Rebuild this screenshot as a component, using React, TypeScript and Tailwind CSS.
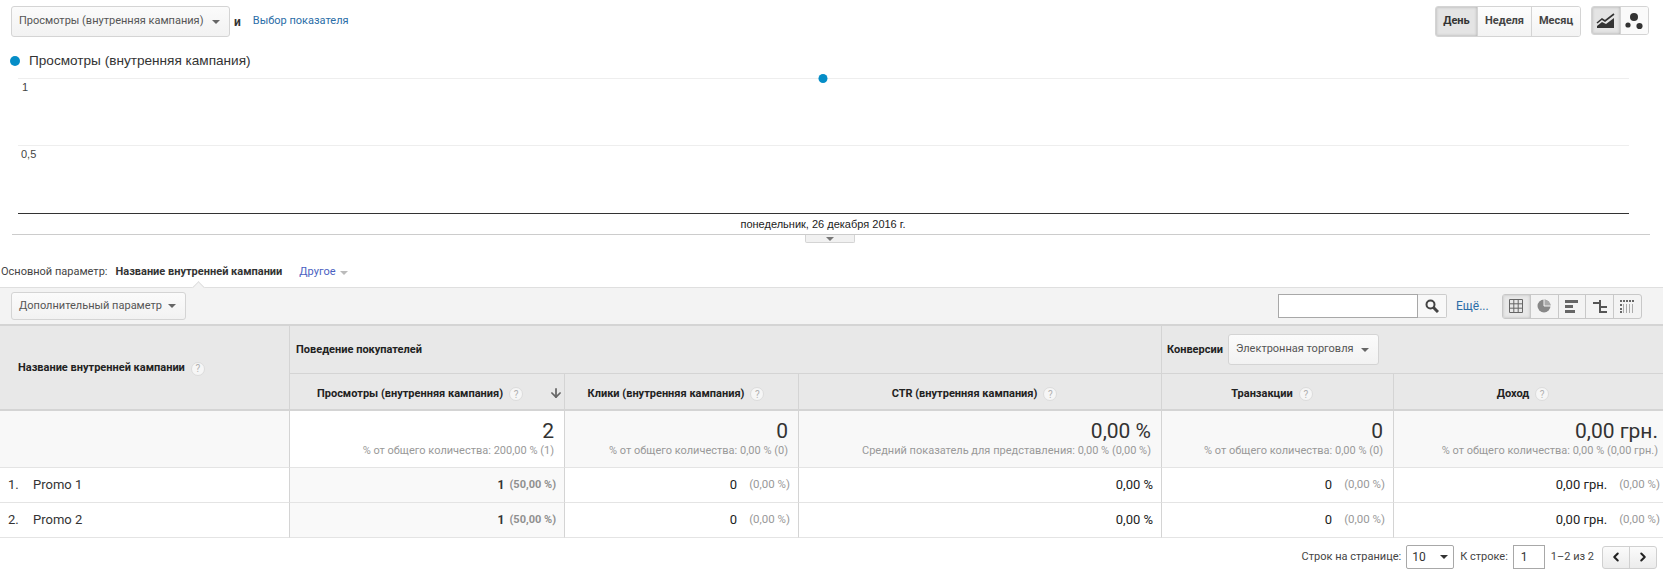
import { ArrowDown, ChevronLeft, ChevronRight } from "lucide-react";
import React from "react";

const COLS = "grid grid-cols-[289px_275px_234px_363px_232px_270px]";

// ---- small pieces ----

function Caret({ className = "border-t-[#666]" }: { className?: string }) {
  return <span className={`inline-block shrink-0 w-0 h-0 border-x-[4px] border-x-transparent border-t-[4px] ${className}`} />;
}

function Help() {
  return (
    <span className="inline-flex w-[14px] h-[14px] items-center justify-center rounded-full bg-[#f6f6f6] border border-[#dcdcdc] text-[10px] font-normal text-[#b0b0b0] ml-[6px]">
      ?
    </span>
  );
}

function DropButton({ label, className }: { label: string; className: string }) {
  return (
    <div
      className={`flex items-center justify-between whitespace-nowrap rounded-[3px] border border-[#d4d4d4] bg-linear-to-b from-[#fbfbfb] to-[#f2f2f2] text-[11px] text-[#555] pl-[7px] pr-[9px] ${className}`}
    >
      <span>{label}</span>
      <Caret />
    </div>
  );
}

function ChartToggle() {
  return (
    <div className="flex h-[29px] w-[58px] ml-[10px] rounded-[3px] border border-[#d4d4d4] overflow-hidden">
      <div className="flex-1 flex items-center justify-center bg-[#e4e4e4] shadow-[inset_0_0_3px_#aaa]">
        <svg width="20" height="16" viewBox="0 0 20 16">
          <path d="M1 10 L6 6 L9 8 L18 1" fill="none" stroke="#333" strokeWidth="1.6" />
          <path d="M1 15 L1 13 L6 9 L10 11 L18 5 L18 15 Z" fill="#333" />
        </svg>
      </div>
      <div className="flex-1 flex items-center justify-center border-l border-[#d4d4d4] bg-[#fafafa]">
        <svg width="18" height="18" viewBox="0 0 18 18">
          <circle cx="9" cy="5" r="4" fill="#333" />
          <circle cx="3" cy="13" r="2.6" fill="#333" />
          <circle cx="14.5" cy="14" r="3.1" fill="#333" />
        </svg>
      </div>
    </div>
  );
}

function ViewIcon({ kind }: { kind: number }) {
  if (kind === 0)
    return (
      <svg width="14" height="14" viewBox="0 0 14 14" fill="none" stroke="#666">
        <path d="M.5.5h13v13H.5zM.5 4.8h13M.5 9.2h13M4.8.5v13M9.2.5v13" />
      </svg>
    );
  if (kind === 1)
    return (
      <svg width="14" height="14" viewBox="0 0 14 14">
        <circle cx="7" cy="7" r="6.5" fill="#888" />
        <path d="M7 7V.5A6.5 6.5 0 0 1 13.5 7Z" fill="#aaa" />
        <path d="M7 0v7h7" fill="none" stroke="#f4f4f4" strokeWidth="1" />
      </svg>
    );
  if (kind === 2)
    return (
      <svg width="13" height="13" viewBox="0 0 13 13" fill="#666">
        <path d="M0 0h13v3H0zM0 5h8v3H0zM0 10h10v3H0z" />
      </svg>
    );
  if (kind === 3)
    return (
      <svg width="14" height="13" viewBox="0 0 14 13" fill="#555">
        <path d="M0 2h8v2H0zM6 0h2v13H6zM6 6h8v2H6zM6 11h8v2H6z" />
      </svg>
    );
  return (
    <svg width="15" height="13" viewBox="0 0 15 13">
      <path d="M0 0h2v2H0zM3 0h2v2H3zM6 0h2v2H6zM9 0h2v2H9zM12 0h2v2h-2zM0 4h2v2H0zM0 8h2v2H0zM0 11h2v2H0z" fill="#666" />
      <path d="M3.5 4v9M6.5 4v9M9.5 4v9M12.5 4v9" stroke="#aaa" fill="none" />
    </svg>
  );
}

function SearchIcon() {
  return (
    <svg width="14" height="14" viewBox="0 0 14 14" fill="none" stroke="#444">
      <circle cx="5.5" cy="5.5" r="4" strokeWidth="2" />
      <path d="M8.5 8.5L13 13" strokeWidth="3" />
    </svg>
  );
}

// ---- top area ----

function TopBar() {
  return (
    <div className="flex items-center h-[31px] mt-[6px] pl-[11px] pr-[14px]">
      <DropButton label="Просмотры (внутренняя кампания)" className="w-[219px] h-[31px]" />
      <span className="ml-[4px] text-[12px] font-bold text-[#333]">и</span>
      <a className="ml-[12px] text-[11px] text-[#2a6da7]">Выбор показателя</a>
      <div className="ml-auto flex">
        <div className="flex h-[31px] w-[146px] rounded-[3px] border border-[#d4d4d4] text-[11px] font-bold text-[#444] overflow-hidden">
          <div className="w-[41px] flex items-center justify-center bg-[#e4e4e4] shadow-[inset_0_0_3px_#aaa] text-[#333]">День</div>
          <div className="w-[54px] flex items-center justify-center bg-linear-to-b from-[#fdfdfd] to-[#f3f3f3] border-l border-[#d4d4d4]">Неделя</div>
          <div className="flex-1 flex items-center justify-center bg-linear-to-b from-[#fdfdfd] to-[#f3f3f3] border-l border-[#d4d4d4]">Месяц</div>
        </div>
        <ChartToggle />
      </div>
    </div>
  );
}

function Chart() {
  return (
    <svg width="1663" height="166" viewBox="0 69 1663 166" className="block">
      <path d="M18 78.5H1629M18 145.5H1629" stroke="#eeeeee" />
      <path d="M18 213.5H1629" stroke="#333" />
      <path d="M12 234.5H1650" stroke="#cccccc" />
      <circle cx="823" cy="78.5" r="4.5" fill="#058dc7" />
      <g fontFamily="'Liberation Sans', Arial, sans-serif" fontSize="11" fill="#444">
        <text x="22" y="91">1</text>
        <text x="21" y="158">0,5</text>
        <text x="823" y="228" textAnchor="middle" fill="#222">понедельник, 26 декабря 2016 г.</text>
      </g>
    </svg>
  );
}

function ChartArea() {
  return (
    <div>
      <TopBar />
      <div className="flex items-center h-[16px] mt-[16px] pl-[10px]">
        <span className="w-[10px] h-[10px] rounded-full bg-[#058dc7]" />
        <span className="ml-[9px] text-[13.6px] text-[#333] font-['Liberation_Sans',sans-serif]">Просмотры (внутренняя кампания)</span>
      </div>
      <Chart />
      <div className="flex items-center justify-center ml-[805px] w-[50px] h-[8px] bg-[#f1f1f1] border-x border-b border-[#d4d4d4] rounded-b-[2px]">
        <Caret className="border-t-[#777]" />
      </div>
    </div>
  );
}

// ---- table toolbar ----

function DimensionRow() {
  return (
    <div className="flex items-center h-[44px] pt-[15px] text-[11px]">
      <span className="ml-[1px] text-[#444]">Основной параметр:</span>
      <span className="ml-[8px] font-bold text-[#333]">Название внутренней кампании</span>
      <span className="ml-[17px] text-[#4a5fc1]">Другое</span>
      <Caret className="ml-[4px] border-t-[#bbb]" />
    </div>
  );
}

function Toolbar() {
  return (
    <div className="relative flex items-center h-[39px] pl-[11px] pr-[21px] bg-[#f3f3f3] border-t border-[#dfdfdf] border-b-2 border-b-[#d4d4d4]">
      <span className="absolute left-[194px] -top-[5px] w-[9px] h-[9px] rotate-45 bg-[#f3f3f3] border-l border-t border-[#dfdfdf]" />
      <DropButton label="Дополнительный параметр" className="w-[175px] h-[28px]" />
      <div className="ml-auto flex h-[24px] w-[169px]">
        <div className="w-[140px] bg-white border border-[#a8a8a8]" />
        <div className="flex-1 flex items-center justify-center border-y border-r border-[#ccc] bg-[#f8f8f8] rounded-r-[2px]">
          <SearchIcon />
        </div>
      </div>
      <a className="ml-[9px] w-[46px] text-[12px] text-[#2a6da7]">Ещё...</a>
      <div className="flex w-[140px] h-[25px] rounded-[3px] border border-[#c8c8c8] overflow-hidden">
        {[0, 1, 2, 3, 4].map((k) => (
          <div
            key={k}
            className={`flex-1 flex items-center justify-center ${k > 0 ? "border-l border-[#c8c8c8]" : "bg-[#e8e8e8] shadow-[inset_0_0_3px_#bbb]"}`}
          >
            <ViewIcon kind={k} />
          </div>
        ))}
      </div>
    </div>
  );
}

// ---- table ----

function HeadCell({ label, sorted, first }: { label: string; sorted?: boolean; first?: boolean }) {
  return (
    <div
      className={`relative flex items-center justify-center h-[37px] pt-[5px] border-b-2 border-[#d4d4d4] ${first ? "pr-[13px]" : "border-l pr-[11px]"}`}
    >
      <span className="font-bold text-[11px] text-[#222]">{label}</span>
      <Help />
      {sorted && <ArrowDown size={14} strokeWidth={3} color="#666" className="absolute right-[1px] top-[12px]" />}
    </div>
  );
}

function TableHead() {
  return (
    <div className="grid grid-cols-[289px_1fr] bg-[#e8e8e8] border-[#d4d4d4]">
      <div className="flex items-center pl-[18px] pt-[2px] border-b-2 border-[#d4d4d4]">
        <span className="font-bold text-[11px] text-[#222]">Название внутренней кампании</span>
        <Help />
      </div>
      <div className="border-l border-[#d4d4d4]">
        <div className="grid grid-cols-[871px_503px]">
          <div className="flex items-center h-[48px] pl-[6px] border-b border-[#d4d4d4]">
            <span className="mt-[2px] font-bold text-[11px] text-[#222]">Поведение покупателей</span>
          </div>
          <div className="flex items-center h-[48px] pl-[5px] border-l border-b border-[#d4d4d4]">
            <span className="mt-[2px] font-bold text-[11px] text-[#222]">Конверсии</span>
            <DropButton label="Электронная торговля" className="ml-[5px] w-[151px] h-[31px]" />
          </div>
        </div>
        <div className="grid grid-cols-[275px_234px_363px_232px_270px] -ml-px">
          <HeadCell label="Просмотры (внутренняя кампания)" sorted first />
          <HeadCell label="Клики (внутренняя кампания)" />
          <HeadCell label="CTR (внутренняя кампания)" />
          <HeadCell label="Транзакции" />
          <HeadCell label="Доход" />
        </div>
      </div>
    </div>
  );
}

function TotalCell({ value, note, white, last }: { value: string; note: string; white?: boolean; last?: boolean }) {
  return (
    <div
      className={`flex flex-col items-end pt-[8px] border-l border-[#d4d4d4] border-b border-b-[#e4e4e4] ${last ? "pr-[5px]" : "pr-[10px]"} ${white ? "bg-white" : "bg-[#f8f8f8]"}`}
    >
      <span className="text-[21px] leading-[24px] text-[#333]">{value}</span>
      <span className="text-[11px] leading-[16px] text-[#999]">{note}</span>
    </div>
  );
}

function TotalsRow() {
  return (
    <div className={`${COLS} h-[57px]`}>
      <div className="bg-[#f8f8f8] border-b border-[#e4e4e4]" />
      <TotalCell white value="2" note="% от общего количества: 200,00 % (1)" />
      <TotalCell value="0" note="% от общего количества: 0,00 % (0)" />
      <TotalCell value="0,00 %" note="Средний показатель для представления: 0,00 % (0,00 %)" />
      <TotalCell value="0" note="% от общего количества: 0,00 % (0)" />
      <TotalCell last value="0,00 грн." note="% от общего количества: 0,00 % (0,00 грн.)" />
    </div>
  );
}

function ValueCell({ value, pct, last }: { value: string; pct?: string; last?: boolean }) {
  return (
    <div className={`flex items-center justify-end border-l border-[#d4d4d4] border-b border-b-[#e4e4e4] ${last ? "pr-[3px]" : "pr-[8px]"}`}>
      <span className="text-[13px] text-[#222]">{value}</span>
      {pct && <span className="ml-[12px] text-[11.5px] text-[#999]">{pct}</span>}
    </div>
  );
}

function DataRow({ n, name }: { n: number; name: string }) {
  return (
    <div className={`${COLS} h-[35px]`}>
      <div className="flex items-center border-b border-[#e4e4e4] text-[13px] text-[#333]">
        <span className="ml-[8px] w-[25px]">{n}.</span>
        <span>{name}</span>
      </div>
      <div className="flex items-center justify-end pr-[8px] bg-[#f9f9f9] border-l border-[#d4d4d4] border-b border-b-[#e4e4e4]">
        <span className="text-[12px] font-bold text-[#333]">1</span>
        <span className="ml-[5px] text-[11px] font-bold text-[#909090]">(50,00 %)</span>
      </div>
      <ValueCell value="0" pct="(0,00 %)" />
      <ValueCell value="0,00 %" />
      <ValueCell value="0" pct="(0,00 %)" />
      <ValueCell last value="0,00 грн." pct="(0,00 %)" />
    </div>
  );
}

function Pagination() {
  return (
    <div className="flex items-center justify-end h-[38px] pr-[6px] text-[11px] text-[#444]">
      <span>Строк на странице:</span>
      <div className="flex items-center justify-between ml-[5px] w-[48px] h-[24px] px-[5px] bg-white border border-[#a8a8a8] rounded-[2px]">
        <span className="text-[12px] text-[#333]">10</span>
        <Caret className="border-t-[#333]" />
      </div>
      <span className="ml-[6px]">К строке:</span>
      <div className="flex items-center ml-[5px] w-[32px] h-[24px] pl-[7px] bg-white border border-[#a8a8a8] text-[12px] text-[#333]">1</div>
      <span className="ml-[6px]">1–2 из 2</span>
      <div className="flex ml-[8px] w-[55px] h-[23px] rounded-[3px] border border-[#d0d0d0] bg-linear-to-b from-[#fbfbfb] to-[#ececec]">
        <div className="flex-1 flex items-center justify-center">
          <ChevronLeft size={14} strokeWidth={3.5} color="#222" />
        </div>
        <div className="flex-1 flex items-center justify-center border-l border-[#d0d0d0]">
          <ChevronRight size={14} strokeWidth={3.5} color="#222" />
        </div>
      </div>
    </div>
  );
}

export default function App() {
  return (
    <div className="w-[1663px] h-[576px] overflow-hidden bg-white font-[Roboto,sans-serif]">
      <ChartArea />
      <DimensionRow />
      <Toolbar />
      <TableHead />
      <TotalsRow />
      <DataRow n={1} name="Promo 1" />
      <DataRow n={2} name="Promo 2" />
      <Pagination />
    </div>
  );
}
